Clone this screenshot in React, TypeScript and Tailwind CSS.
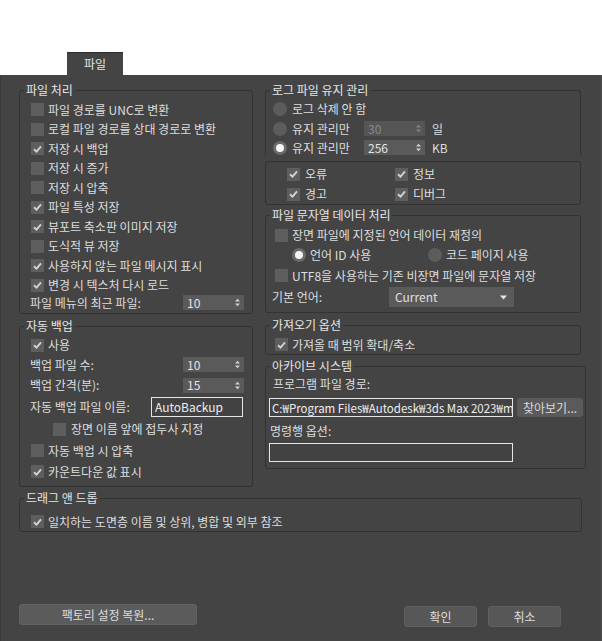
import React from "react";

function Check({ on }: { on?: boolean }) {
  return (
    <span className="w-[13px] h-[13px] bg-[#5e5e5e] flex items-center justify-center shrink-0">
      {on && (
        <svg width="9" height="8" viewBox="0 0 9 8">
          <path d="M1 4.3 L3.5 6.6 L8 1.3" stroke="#d2d2d2" strokeWidth="1.9" fill="none" />
        </svg>
      )}
    </span>
  );
}

function Radio({ on }: { on?: boolean }) {
  return (
    <span
      className={
        on
          ? "w-[14px] h-[14px] rounded-full bg-[#6a6a6a] flex items-center justify-center shrink-0"
          : "w-[14px] h-[14px] rounded-full bg-[#5c5c5c] flex items-center justify-center shrink-0"
      }
    >
      {on && <span className="w-[8px] h-[8px] rounded-full bg-[#f4f4f4]" />}
    </span>
  );
}

function Spinner({ value, disabled }: { value: string; disabled?: boolean }) {
  return (
    <div
      className={
        disabled
          ? "h-[15px] w-[61px] bg-[#555555] flex items-center justify-between pl-[4px] pr-[4px] shrink-0"
          : "h-[15px] w-[61px] bg-[#5a5a5a] flex items-center justify-between pl-[4px] pr-[4px] shrink-0"
      }
    >
      <span className={disabled ? "text-[12px] leading-none text-[#8a8a8a]" : "text-[12px] leading-none text-[#e4e4e4]"}>
        {value}
      </span>
      <svg width="5" height="9" viewBox="0 0 5 9">
        <path d="M0 3.6 L2.5 0.8 L5 3.6Z M0 5.4 L2.5 8.2 L5 5.4Z" fill={disabled ? "#858585" : "#cfcfcf"} />
      </svg>
    </div>
  );
}

function Legend({ children }: { children: React.ReactNode }) {
  return <legend className="ml-[4px] px-[2px] leading-[14px] text-[12px] text-[#e6e6e6]">{children}</legend>;
}

export default function App() {
  return (
    <div className="w-[602px] h-[641px] bg-white flex flex-col font-['Noto_Sans_CJK_KR',sans-serif] text-[12px] leading-[14px] text-[#dedede] overflow-hidden">
      <div className="h-[52px] shrink-0" />
      <div className="h-[23px] flex pl-[67px] shrink-0">
        <div className="w-[56px] bg-[#444444] border-t border-[#2c2c2c] flex items-center justify-center text-[12px] text-[#e6e6e6]">
          파일
        </div>
      </div>
      <div className="flex-1 bg-[#444444] flex flex-col border-l border-[#3a3a3a] border-r border-r-[#4e4e4e]">
        <div className="flex gap-[12px] pl-[18px] mt-[8px]">
          {/* Left column */}
          <div className="w-[234px] flex flex-col">
            <fieldset className="border border-[#333333] rounded-[3px] min-w-0">
              <Legend>파일 처리</Legend>
              <div className="pt-[3px] pl-[11px] pr-[8px] pb-[3px] flex flex-col">
                {[
                  ["파일 경로를 UNC로 변환", false],
                  ["로컬 파일 경로를 상대 경로로 변환", false],
                  ["저장 시 백업", true],
                  ["저장 시 증가", false],
                  ["저장 시 압축", false],
                  ["파일 특성 저장", true],
                  ["뷰포트 축소판 이미지 저장", true],
                  ["도식적 뷰 저장", false],
                  ["사용하지 않는 파일 메시지 표시", true],
                  ["변경 시 텍스처 다시 로드", true],
                ].map(([t, on]) => (
                  <div key={t as string} className="h-[19.5px] flex items-center gap-[4px]">
                    <Check on={on as boolean} />
                    <span>{t}</span>
                  </div>
                ))}
                <div className="h-[15px] flex items-center justify-between">
                  <span className="-ml-[1px]">파일 메뉴의 최근 파일:</span>
                  <Spinner value="10" />
                </div>
              </div>
            </fieldset>

            <fieldset className="mt-[5px] border border-[#333333] rounded-[3px] min-w-0">
              <Legend>자동 백업</Legend>
              <div className="pt-[2px] pl-[11px] pr-[8px] pb-[4px] flex flex-col">
                <div className="h-[20px] flex items-center gap-[4px]">
                  <Check on />
                  <span>사용</span>
                </div>
                <div className="h-[19px] flex items-center justify-between">
                  <span className="-ml-[1px]">백업 파일 수:</span>
                  <Spinner value="10" />
                </div>
                <div className="h-[22px] flex items-center justify-between">
                  <span className="-ml-[1px]">백업 간격(분):</span>
                  <Spinner value="15" />
                </div>
                <div className="h-[22px] flex items-center justify-between">
                  <span className="-ml-[1px]">자동 백업 파일 이름:</span>
                  <div className="w-[92px] h-[20px] border-[1.5px] border-[#e6e6e6] bg-[#424242] flex items-center px-[3px] text-[12px] text-[#eeeeee] mr-[1px]">
                    AutoBackup
                  </div>
                </div>
                <div className="h-[22px] flex items-center gap-[5px] pl-[22px]">
                  <Check />
                  <span>장면 이름 앞에 접두사 지정</span>
                </div>
                <div className="h-[21px] flex items-center gap-[4px]">
                  <Check />
                  <span>자동 백업 시 압축</span>
                </div>
                <div className="h-[21px] flex items-center gap-[4px]">
                  <Check on />
                  <span>카운트다운 값 표시</span>
                </div>
              </div>
            </fieldset>
          </div>

          {/* Right column */}
          <div className="w-[321px] flex flex-col">
            <fieldset className="w-[316px] h-[72px] border border-[#333333] border-b-0 rounded-t-[3px] min-w-0">
              <Legend>로그 파일 유지 관리</Legend>
              <div className="pt-[2px] pl-[7px] flex flex-col">
                <div className="h-[20px] flex items-center gap-[5px]">
                  <Radio />
                  <span>로그 삭제 안 함</span>
                </div>
                <div className="h-[19px] flex items-center gap-[5px]">
                  <Radio />
                  <span className="w-[67px] whitespace-nowrap">유지 관리만</span>
                  <Spinner value="30" disabled />
                  <span className="ml-[2px]">일</span>
                </div>
                <div className="h-[19px] flex items-center gap-[5px]">
                  <Radio on />
                  <span className="w-[67px] whitespace-nowrap">유지 관리만</span>
                  <Spinner value="256" />
                  <span className="ml-[2px] text-[12px]">KB</span>
                </div>
              </div>
            </fieldset>

            <div className="mt-[6px] w-[316px] border border-[#333333] rounded-[3px] pt-[2px] pl-[21px] grid grid-cols-[108px_1fr]">
              {[
                ["오류", true],
                ["정보", true],
                ["경고", true],
                ["디버그", true],
              ].map(([t, on]) => (
                <div key={t as string} className="h-[20px] flex items-center gap-[5px]">
                  <Check on={on as boolean} />
                  <span>{t}</span>
                </div>
              ))}
            </div>

            <fieldset className="mt-[3px] w-[316px] border border-[#333333] rounded-[3px] min-w-0">
              <Legend>파일 문자열 데이터 처리</Legend>
              <div className="pt-[3px] pl-[9px] pb-[4px] flex flex-col">
                <div className="h-[20px] flex items-center gap-[4px]">
                  <Check />
                  <span>장면 파일에 지정된 언어 데이터 재정의</span>
                </div>
                <div className="h-[20px] flex items-center pl-[17px]">
                  <div className="w-[136px] flex items-center gap-[4px]">
                    <Radio on />
                    <span>언어 ID 사용</span>
                  </div>
                  <div className="flex items-center gap-[4px]">
                    <Radio />
                    <span>코드 페이지 사용</span>
                  </div>
                </div>
                <div className="h-[21px] flex items-center gap-[4px]">
                  <Check />
                  <span className="whitespace-nowrap">UTF8을 사용하는 기존 비장면 파일에 문자열 저장</span>
                </div>
                <div className="h-[22px] flex items-center -ml-[3px]">
                  <span className="w-[117px]">기본 언어:</span>
                  <div className="w-[125px] h-[20px] bg-[#5a5a5a] flex items-center justify-between pl-[6px] pr-[7px] text-[12px] text-[#e0e0e0]">
                    <span>Current</span>
                    <svg width="7" height="5" viewBox="0 0 7 5">
                      <path d="M0 0.5 L7 0.5 L3.5 4.5Z" fill="#e6e6e6" />
                    </svg>
                  </div>
                </div>
              </div>
            </fieldset>

            <fieldset className="mt-[5px] w-[316px] border border-[#333333] rounded-[3px] min-w-0">
              <Legend>가져오기 옵션</Legend>
              <div className="pt-[3px] pl-[9px]">
                <div className="h-[19px] flex items-center gap-[4px]">
                  <Check on />
                  <span>가져올 때 범위 확대/축소</span>
                </div>
              </div>
            </fieldset>

            <fieldset className="mt-[4px] w-[321px] border border-[#333333] rounded-[3px] min-w-0">
              <Legend>아카이브 시스템</Legend>
              <div className="pt-[2px] pl-[3px] pb-[6px] flex flex-col">
                <div className="h-[18px] flex items-center pl-[4px]">프로그램 파일 경로:</div>
                <div className="mt-[5px] flex gap-[4px]">
                  <div className="w-[244px] h-[19px] border-[1.5px] border-[#e6e6e6] bg-[#424242] flex items-center px-[2px] text-[11.5px] text-[#eeeeee] overflow-hidden whitespace-nowrap">
                    C:₩Program Files₩Autodesk₩3ds Max 2023₩m
                  </div>
                  <div className="w-[66px] h-[19px] rounded-[3px] bg-[#5a5a5a] flex items-center justify-center text-[12px] text-[#dcdcdc] whitespace-nowrap">
                    찾아보기...
                  </div>
                </div>
                <div className="mt-[5px] h-[18px] flex items-center pl-[1px]">명령행 옵션:</div>
                <div className="mt-[3px] w-[244px] h-[19px] border-[1.5px] border-[#e6e6e6] bg-[#424242]" />
              </div>
            </fieldset>
          </div>
        </div>

        <fieldset className="mt-[4px] ml-[18px] w-[563px] border border-[#333333] rounded-[3px] min-w-0">
          <Legend>드래그 앤 드롭</Legend>
          <div className="pt-[7px] pl-[11px]">
            <div className="h-[19px] flex items-center gap-[4px]">
              <Check on />
              <span>일치하는 도면층 이름 및 상위, 병합 및 외부 참조</span>
            </div>
          </div>
        </fieldset>

        <div className="mt-auto flex justify-between items-end pl-[18px] pr-[40px] pb-[14px]">
          <div className="w-[178px] h-[21px] mb-[2px] rounded-[3px] bg-[#5b5b5b] border border-[#626262] flex items-center justify-center text-[#dcdcdc]">
            팩토리 설정 복원...
          </div>
          <div className="flex gap-[11px]">
            <div className="w-[73px] h-[21px] rounded-[3px] bg-[#575757] border border-[#5f5f5f] flex items-center justify-center text-[#dcdcdc]">
              확인
            </div>
            <div className="w-[73px] h-[21px] rounded-[3px] bg-[#575757] border border-[#5f5f5f] flex items-center justify-center text-[#dcdcdc]">
              취소
            </div>
          </div>
        </div>
      </div>
    </div>
  );
}
